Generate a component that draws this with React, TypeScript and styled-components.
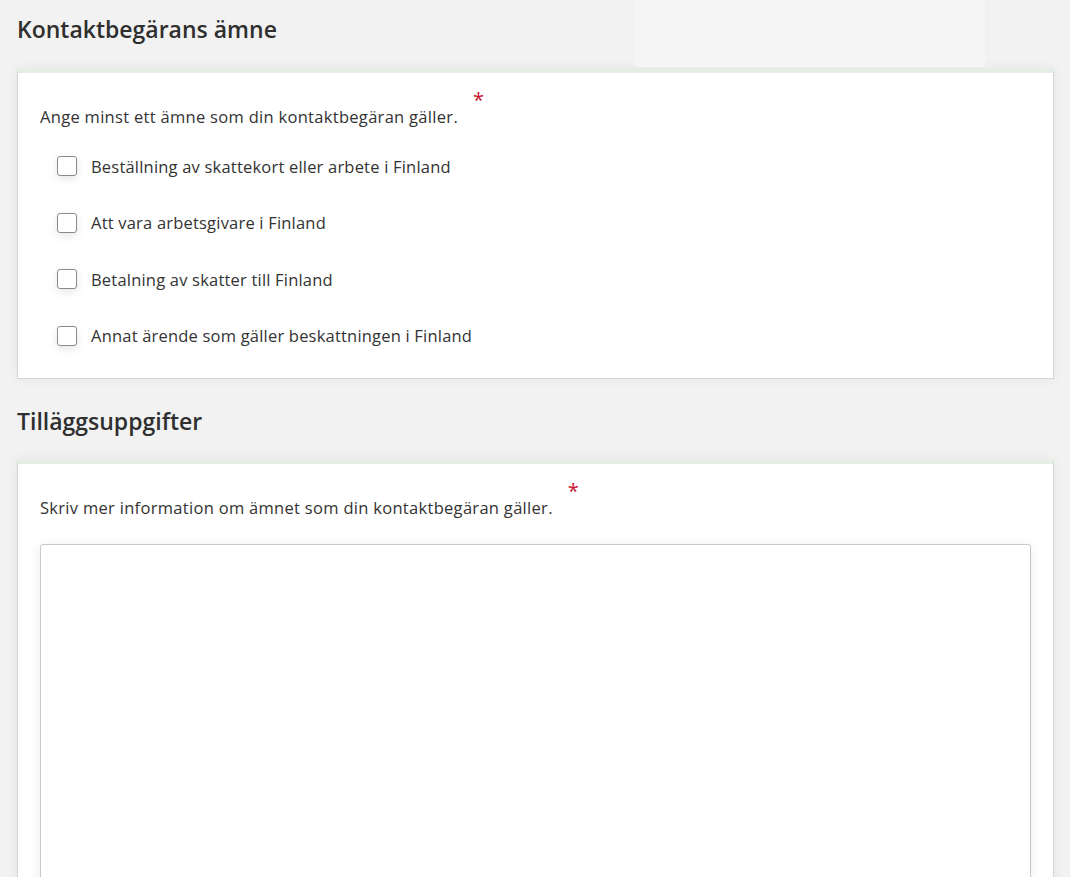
import React from 'react';
import styled, { createGlobalStyle } from 'styled-components';

const GlobalStyle = createGlobalStyle`
    body {
        margin: 0;
        background: #f2f2f2;
        font-family: 'Open Sans', 'Noto Sans', sans-serif;
        color: #333333;
    }
`;

const topics = [
    'Beställning av skattekort eller arbete i Finland',
    'Att vara arbetsgivare i Finland',
    'Betalning av skatter till Finland',
    'Annat ärende som gäller beskattningen i Finland',
];

const Page = styled.div`
    padding: 0 16px 0 17px;
`;

const HeaderRow = styled.div<{ $first?: boolean }>`
    display: flex;
    align-items: flex-start;
    height: ${({ $first }) => ($first ? '69px' : '81px')};
`;

const Heading = styled.h2<{ $top: number }>`
    margin: 0;
    padding-top: ${({ $top }) => $top}px;
    font-size: 23px;
    line-height: 32px;
    font-weight: 600;
    color: #2f2f2f;
`;

const HeaderPanel = styled.div`
    margin-left: auto;
    margin-right: 69px;
    width: 350px;
    height: 67px;
    background: #f5f5f5;
`;

const Card = styled.div<{ $bottom: number }>`
    background: #ffffff;
    border: 1px solid #d4d4d4;
    border-top: 4px solid #e4eee5;
    box-shadow: 0 0 12px rgba(0, 0, 0, 0.06);
    padding: 32px 22px ${({ $bottom }) => $bottom}px 22px;
    overflow: hidden;
`;

const Question = styled.div`
    font-size: 16.5px;
    line-height: 24px;
    letter-spacing: 0.3px;
`;

const Required = styled.span`
    display: inline-block;
    margin-left: 15px;
    color: #c8102e;
    font-size: 20px;
    line-height: 1;
    transform: translateY(-16px);
`;

const CheckList = styled.div`
    display: flex;
    flex-direction: column;
    margin-top: 9px;
    padding-left: 17px;
`;

const CheckRow = styled.label`
    display: flex;
    align-items: center;
    gap: 14px;
    height: 56.5px;
    font-size: 16.5px;
    letter-spacing: 0.2px;
`;

const Box = styled.span`
    width: 20px;
    height: 20px;
    box-sizing: border-box;
    border: 1px solid #8a8a8a;
    border-radius: 3px;
    background: #ffffff;
    box-shadow: 0 3px 8px rgba(0, 0, 0, 0.1);
    flex-shrink: 0;
`;

const TextArea = styled.div`
    margin-top: 24px;
    height: 420px;
    border: 1px solid #c8c8c8;
    border-radius: 3px;
    background: #ffffff;
    box-shadow: 0 2px 12px rgba(0, 0, 0, 0.08);
`;

export default function App() {
    return (
        <>
            <GlobalStyle />
            <Page>
                <HeaderRow $first>
                    <Heading $top={13}>Kontaktbegärans ämne</Heading>
                    <HeaderPanel />
                </HeaderRow>
                <Card $bottom={14}>
                    <Question>
                        Ange minst ett ämne som din kontaktbegäran gäller.
                        <Required>*</Required>
                    </Question>
                    <CheckList>
                        {topics.map((t) => (
                            <CheckRow key={t}>
                                <Box />
                                {t}
                            </CheckRow>
                        ))}
                    </CheckList>
                </Card>
                <HeaderRow>
                    <Heading $top={26}>Tilläggsuppgifter</Heading>
                </HeaderRow>
                <Card $bottom={40}>
                    <Question>
                        Skriv mer information om ämnet som din kontaktbegäran gäller.
                        <Required>*</Required>
                    </Question>
                    <TextArea />
                </Card>
            </Page>
        </>
    );
}
